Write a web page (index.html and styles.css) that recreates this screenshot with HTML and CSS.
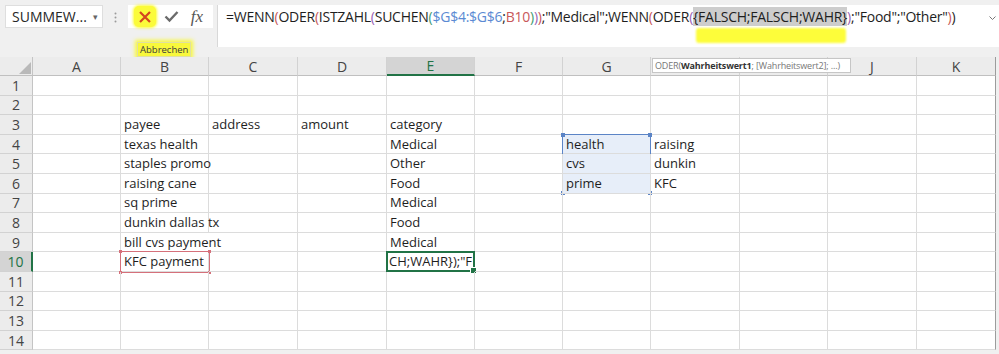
FILE: index.html
```html
<!DOCTYPE html>
<html lang="de">
<head>
    <meta charset="UTF-8">
    <title>Excel WENN ODER</title>
    <link rel="stylesheet" href="styles.css">
</head>
<body>
    <div class="leiste">
        <div class="namensfeld">
            <span>SUMMEW...</span>
            <span class="pfeil">&#9662;</span>
        </div>
        <div class="griff">
            <svg width="3" height="11" viewBox="0 0 3 11"><circle cx="1.5" cy="1.5" r="1" fill="#9a9a9a"/><circle cx="1.5" cy="5.5" r="1" fill="#9a9a9a"/><circle cx="1.5" cy="9.5" r="1" fill="#9a9a9a"/></svg>
        </div>
        <div class="knoepfe">
            <span class="knopf abbrechen">
                <svg width="14" height="14" viewBox="0 0 14 14"><path d="M2 2 L12 12 M12 2 L2 12" stroke="#d3461f" stroke-width="2.2"/></svg>
            </span>
            <span class="knopf">
                <svg width="15" height="13" viewBox="0 0 15 13"><path d="M1.5 6.5 L5.5 10.5 L13.5 2" fill="none" stroke="#6b6b6b" stroke-width="2.4"/></svg>
            </span>
            <span class="knopf fx">fx</span>
            <div class="tipp">Abbrechen</div>
        </div>
        <div class="formel">
            <div class="formel-text">=WENN<span class="k1">(</span>ODER<span class="k1">(</span>ISTZAHL<span class="k2">(</span>SUCHEN<span class="k3">(</span><span class="ref-g">$G$4:$G$6</span>;<span class="ref-b">B10</span><span class="k3">)</span><span class="k2">)</span><span class="k1">)</span>;"Medical";WENN<span class="k1">(</span>ODER<span class="k2">(</span><span class="markiert">{FALSCH;FALSCH;WAHR}</span><span class="k2">)</span>;"Food";"Other"<span class="k1">)</span>)</div>
            <svg class="aufklappen" width="7" height="5" viewBox="0 0 7 5"><path d="M0.5 0.5 L3.5 3.5 L6.5 0.5" fill="none" stroke="#777" stroke-width="1"/></svg>
            <div class="marker"></div>
        </div>
    </div>

    <div class="blatt">
        <table class="tabelle">
            <colgroup>
                <col style="width:33px"><col style="width:88px"><col style="width:88px"><col style="width:89px"><col style="width:89px"><col style="width:88px"><col style="width:88px"><col style="width:88px"><col style="width:89px"><col style="width:88px"><col style="width:89px"><col style="width:79px">
            </colgroup>
            <tr class="kopf">
                <th class="ecke"><svg width="12" height="12" viewBox="0 0 12 12"><polygon points="12,0 12,12 0,12" fill="#b9b9b9"/></svg></th>
                <th>A</th><th>B</th><th>C</th><th>D</th><th class="aktiv">E</th><th>F</th><th>G</th><th></th><th></th><th>J</th><th>K</th>
            </tr>
            <tr><th>1</th><td></td><td></td><td></td><td></td><td></td><td></td><td></td><td></td><td></td><td></td><td></td></tr>
            <tr><th>2</th><td></td><td></td><td></td><td></td><td></td><td></td><td></td><td></td><td></td><td></td><td></td></tr>
            <tr><th>3</th><td></td><td>payee</td><td>address</td><td>amount</td><td>category</td><td></td><td></td><td></td><td></td><td></td><td></td></tr>
            <tr><th>4</th><td></td><td>texas health</td><td></td><td></td><td>Medical</td><td></td><td class="bereich">health<div class="rahmen-blau"><i class="griff-p lo"></i><i class="griff-p ro"></i><i class="griff-p lu"></i><i class="griff-p ru"></i></div></td><td>raising</td><td></td><td></td><td></td></tr>
            <tr><th>5</th><td></td><td>staples promo</td><td></td><td></td><td>Other</td><td></td><td class="bereich">cvs</td><td>dunkin</td><td></td><td></td><td></td></tr>
            <tr><th>6</th><td></td><td>raising cane</td><td></td><td></td><td>Food</td><td></td><td class="bereich">prime</td><td>KFC</td><td></td><td></td><td></td></tr>
            <tr><th>7</th><td></td><td>sq prime</td><td></td><td></td><td>Medical</td><td></td><td></td><td></td><td></td><td></td><td></td></tr>
            <tr><th>8</th><td></td><td>dunkin dallas tx</td><td></td><td></td><td>Food</td><td></td><td></td><td></td><td></td><td></td><td></td></tr>
            <tr><th>9</th><td></td><td class="ueberlauf">bill cvs payment</td><td></td><td></td><td>Medical</td><td></td><td></td><td></td><td></td><td></td><td></td></tr>
            <tr><th class="aktiv">10</th><td></td><td class="bezug">KFC payment<div class="rahmen-rot"><i class="griff-r lo"></i><i class="griff-r ro"></i><i class="griff-r lu"></i><i class="griff-r ru"></i></div></td><td></td><td></td><td class="bearbeiten"><span class="clip">CH;WAHR});"F</span><div class="rahmen-gruen"><i class="fuell"></i></div></td><td></td><td></td><td></td><td></td><td></td><td></td></tr>
            <tr><th>11</th><td></td><td></td><td></td><td></td><td></td><td></td><td></td><td></td><td></td><td></td><td></td></tr>
            <tr><th>12</th><td></td><td></td><td></td><td></td><td></td><td></td><td></td><td></td><td></td><td></td><td></td></tr>
            <tr><th>13</th><td></td><td></td><td></td><td></td><td></td><td></td><td></td><td></td><td></td><td></td><td></td></tr>
            <tr><th>14</th><td></td><td></td><td></td><td></td><td></td><td></td><td></td><td></td><td></td><td></td><td></td></tr>
        </table>
        <div class="hinweis">ODER(<b>Wahrheitswert1</b>; [Wahrheitswert2]; ...)</div>
    </div>
</body>
</html>
```

FILE: styles.css
```css
body {
    margin: 0;
    width: 999px;
    height: 354px;
    overflow: hidden;
    background: #f0f0f0;
    font-family: "Open Sans", sans-serif;
}

/* Formelleiste */
.leiste {
    display: flex;
    align-items: flex-start;
    height: 57px;
    padding: 5px 0 0 5px;
    box-sizing: border-box;
}

.namensfeld {
    width: 98px;
    height: 23px;
    box-sizing: border-box;
    background: #fff;
    border: 1px solid #dedede;
    display: flex;
    align-items: center;
    justify-content: space-between;
    padding: 0 4px 0 6px;
    font-size: 14px;
    color: #262626;
    white-space: nowrap;
}

.pfeil {
    font-size: 9px;
    color: #666;
}

.griff {
    width: 25px;
    display: flex;
    justify-content: center;
    padding-top: 7px;
}

.knoepfe {
    position: relative;
    width: 85px;
    height: 23px;
    background: #fff;
    display: flex;
    align-items: center;
    padding-left: 4px;
    box-sizing: border-box;
}

.knopf {
    width: 26px;
    height: 21px;
    display: flex;
    align-items: center;
    justify-content: center;
}

.abbrechen {
    width: 22px;
    margin: 0 2px;
    background: #fbfb3a;
    border-radius: 5px;
    box-shadow: 0 0 3px 1px #fbfb3a;
}

.fx {
    font-family: "Liberation Serif", serif;
    font-style: italic;
    font-size: 17px;
    color: #555;
}

.tipp {
    position: absolute;
    left: 9px;
    top: 37px;
    padding: 0 2px;
    height: 13px;
    line-height: 13px;
    font-size: 9.5px;
    color: #3a3a3a;
    background: #f8f83c;
    border: 1px solid #e0e0a0;
    box-shadow: 0 0 4px 2px #f8f83c;
}

.formel {
    position: relative;
    flex: 1;
    height: 42px;
    margin-left: 4px;
    background: #fff;
    border-left: 1px solid #d8d8d8;
    display: flex;
    align-items: flex-start;
    padding: 2px 0 0 8px;
    box-sizing: border-box;
}

.formel-text {
    flex: 1;
    font-size: 14px;
    letter-spacing: -0.25px;
    line-height: 20px;
    color: #1e1e1e;
    white-space: nowrap;
    position: relative;
    z-index: 1;
}

.aufklappen {
    margin: 9px 3px 0 0;
}

.k1 { color: #c8585a; }
.k2 { color: #9a63b5; }
.k3 { color: #3f9a72; }
.ref-g { color: #5b8ad3; }
.ref-b { color: #c8585a; }

.markiert {
    background: #cdcdcd;
}

.marker {
    position: absolute;
    left: 478px;
    top: 23px;
    width: 150px;
    height: 15px;
    background: #fdfd3a;
    border-radius: 3px;
    filter: blur(1px);
}

/* Tabellenblatt */
.blatt {
    position: relative;
}

.tabelle {
    width: 996px;
    table-layout: fixed;
    border-collapse: separate;
    border-spacing: 0;
    background: #fff;
    font-size: 13px;
    color: #1e1e1e;
}

.tabelle tr {
    height: 19.6px;
}

.tabelle tr.kopf {
    height: 18px;
}

.tabelle th {
    background: #ececec;
    font-weight: normal;
    color: #444;
    font-size: 14px;
    line-height: 17px;
    padding: 0;
    border-right: 1px solid #d2d2d2;
    border-bottom: 1px solid #d2d2d2;
}

.kopf th {
    border-bottom: 1px solid #c0c0c0;
}

.tabelle th.ecke {
    text-align: right;
    vertical-align: bottom;
    padding: 0 1px 1px 0;
    line-height: 0;
}

.tabelle th.aktiv {
    background: #d4d4d4;
    color: #217346;
}

.kopf th.aktiv {
    border-bottom: 2px solid #217346;
}

.tabelle tr th:first-child {
    border-right: 1px solid #c4c4c4;
}

.tabelle tr th.aktiv:first-child {
    border-right: 2px solid #217346;
}

.tabelle th:last-child,
.tabelle td:last-child {
    border-right: 1px solid #9c9c9c;
}

.tabelle td {
    padding: 0 3px;
    white-space: nowrap;
    line-height: 17px;
    border-right: 1px solid #dcdcdc;
    border-bottom: 1px solid #dcdcdc;
    position: relative;
}

.tabelle td.ueberlauf {
    border-right-color: #fff;
}

.tabelle td.bereich {
    background: #e7eef9;
}

.rahmen-blau,
.rahmen-rot,
.rahmen-gruen {
    position: absolute;
    left: -1px;
    top: -1px;
    box-sizing: border-box;
}

.rahmen-blau {
    width: 89px;
    height: 60px;
    border: 1px solid #5b84c6;
}

.rahmen-rot {
    right: -2px;
    bottom: -2px;
    border: 1px solid #d5707a;
}

.rahmen-gruen {
    right: -1px;
    bottom: -1px;
    border: 2px solid #217346;
}

.griff-p,
.griff-r {
    position: absolute;
    width: 4px;
    height: 4px;
}

.griff-p { background: #5b84c6; }
.griff-r { background: #d5707a; width: 3px; height: 3px; }

.lo { left: -2px; top: -2px; }
.ro { right: -2px; top: -2px; }
.lu { left: -2px; bottom: -2px; }
.ru { right: -2px; bottom: -2px; }

.fuell {
    position: absolute;
    right: -4px;
    bottom: -4px;
    width: 5px;
    height: 5px;
    background: #217346;
    border: 1px solid #fff;
}

.bearbeiten {
    padding: 0 !important;
}

.clip {
    display: block;
    overflow: hidden;
    padding-left: 2px;
    width: 84px;
}

.hinweis {
    position: absolute;
    left: 652px;
    top: 1px;
    width: 199px;
    box-sizing: border-box;
    height: 15px;
    line-height: 13px;
    padding: 0 2px;
    background: #fff;
    border: 1px solid #c6c6c6;
    font-size: 9px;
    letter-spacing: -0.15px;
    color: #777;
    white-space: nowrap;
}

.hinweis b {
    color: #333;
}
```
